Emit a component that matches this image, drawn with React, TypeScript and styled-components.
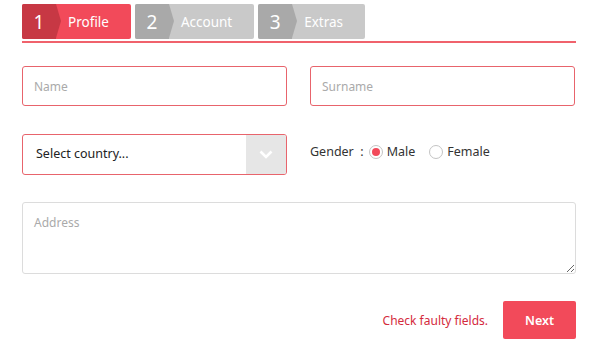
import styled, { createGlobalStyle } from "styled-components";

const GlobalStyle = createGlobalStyle`
  body {
    margin: 0;
    background: #fff;
    font-family: "Segoe UI", "Noto Sans", "Open Sans", sans-serif;
  }
`;

const Wrapper = styled.div`
  width: 554px;
  margin-left: 22px;
  padding-top: 4px;
`;

const Steps = styled.div`
  display: flex;
  gap: 4px;
  padding-bottom: 2px;
  border-bottom: 2px solid #f0626c;
`;

const Step = styled.div<{ $active?: boolean }>`
  display: flex;
  height: 35px;
  border-radius: 2px;
  overflow: hidden;
  background: ${(p) => (p.$active ? "#f24a5a" : "#c9c9c9")};
`;

const StepNum = styled.div<{ $active?: boolean }>`
  position: relative;
  width: 34px;
  display: flex;
  align-items: center;
  justify-content: center;
  color: #fff;
  font-size: 19px;
  background: ${(p) => (p.$active ? "#c73844" : "#a9a9a9")};

  &::after {
    content: "";
    position: absolute;
    right: -5px;
    top: 0;
    border-top: 17.5px solid transparent;
    border-bottom: 17.5px solid transparent;
    border-left: 5px solid ${(p) => (p.$active ? "#c73844" : "#a9a9a9")};
  }
`;

const StepLabel = styled.div`
  display: flex;
  align-items: center;
  padding: 0 22px 0 12px;
  color: #fff;
  font-size: 13.5px;
`;

const Form = styled.div`
  display: grid;
  grid-template-columns: 265px 265px;
  column-gap: 23px;
  margin-top: 23px;
`;

const Input = styled.input`
  box-sizing: border-box;
  height: 40px;
  width: 100%;
  border: 1px solid #e8646c;
  border-radius: 3px;
  padding: 0 11px;
  font: inherit;
  font-size: 12px;
  color: #333;
  outline: none;

  &::placeholder {
    color: #aaa;
  }
`;

const Select = styled.div`
  box-sizing: border-box;
  margin-top: 28px;
  height: 41px;
  border: 1px solid #e8646c;
  border-radius: 3px;
  display: flex;
  align-items: stretch;
  overflow: hidden;
`;

const SelectText = styled.div`
  flex: 1;
  display: flex;
  align-items: center;
  padding-left: 13px;
  padding-bottom: 2px;
  font-size: 12.5px;
  color: #222;
`;

const SelectArrow = styled.div`
  width: 40px;
  background: #e6e6e6;
  display: flex;
  align-items: center;
  justify-content: center;
`;

const Gender = styled.div`
  margin-top: 28px;
  height: 35px;
  display: flex;
  align-items: center;
  font-size: 12.5px;
  color: #333;
`;

const GenderLabel = styled.span`
  margin-right: 5px;
`;

const Radio = styled.span<{ $checked?: boolean }>`
  box-sizing: border-box;
  width: 14px;
  height: 14px;
  border-radius: 50%;
  border: 1px solid #c4c4c4;
  margin-right: 4px;
  display: inline-flex;
  align-items: center;
  justify-content: center;

  &::after {
    content: "";
    width: 8px;
    height: 8px;
    border-radius: 50%;
    background: ${(p) => (p.$checked ? "#f24a5a" : "transparent")};
  }
`;

const Option = styled.label`
  display: flex;
  align-items: center;
  margin-right: 14px;
`;

const Address = styled.textarea`
  grid-column: 1 / 3;
  box-sizing: border-box;
  margin-top: 27px;
  height: 72px;
  width: 554px;
  border: 1px solid #dcdcdc;
  border-radius: 3px;
  padding: 11px 11px;
  font: inherit;
  font-size: 12px;
  outline: none;

  &::placeholder {
    color: #aaa;
  }
`;

const Footer = styled.div`
  display: flex;
  justify-content: flex-end;
  align-items: center;
  gap: 15px;
  margin-top: 27px;
`;

const Error = styled.span`
  color: #d42a3c;
  font-size: 12px;
`;

const NextButton = styled.button`
  width: 73px;
  height: 38px;
  border: none;
  border-radius: 2px;
  background: #f24a5a;
  color: #fff;
  font: inherit;
  font-size: 12.5px;
  font-weight: 600;
`;

const steps = [
  { n: 1, label: "Profile" },
  { n: 2, label: "Account" },
  { n: 3, label: "Extras" },
];

export default function App() {
  return (
    <>
      <GlobalStyle />
      <Wrapper>
        <Steps>
          {steps.map((s) => (
            <Step key={s.n} $active={s.n === 1}>
              <StepNum $active={s.n === 1}>{s.n}</StepNum>
              <StepLabel>{s.label}</StepLabel>
            </Step>
          ))}
        </Steps>
        <Form>
          <Input placeholder="Name" />
          <Input placeholder="Surname" />
          <Select>
            <SelectText>Select country...</SelectText>
            <SelectArrow>
              <svg width="14" height="9" viewBox="0 0 14 9">
                <path d="M1.5 1.5 L7 7 L12.5 1.5" fill="none" stroke="#fff" strokeWidth="2.6" />
              </svg>
            </SelectArrow>
          </Select>
          <Gender>
            <GenderLabel>Gender&nbsp;&nbsp;:</GenderLabel>
            <Option>
              <Radio $checked />
              Male
            </Option>
            <Option>
              <Radio />
              Female
            </Option>
          </Gender>
          <Address placeholder="Address" />
        </Form>
        <Footer>
          <Error>Check faulty fields.</Error>
          <NextButton>Next</NextButton>
        </Footer>
      </Wrapper>
    </>
  );
}
